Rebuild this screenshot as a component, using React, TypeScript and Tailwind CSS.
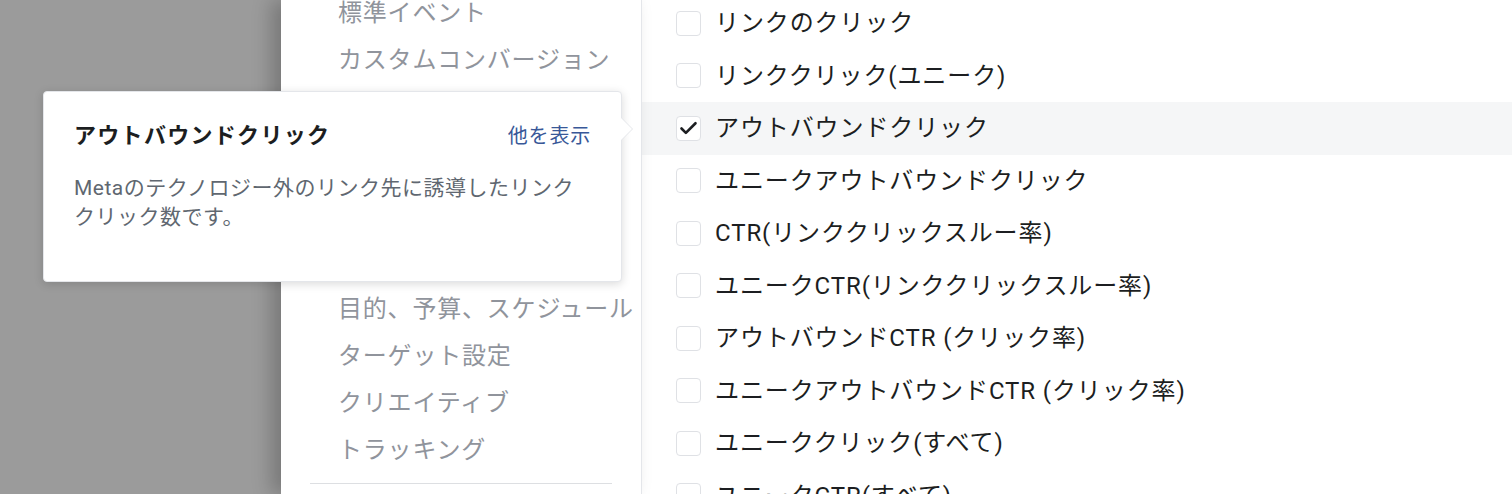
import { Check } from 'lucide-react'

const navTop = ['標準イベント', 'カスタムコンバージョン']
const navBottom = ['目的、予算、スケジュール', 'ターゲット設定', 'クリエイティブ', 'トラッキング']

const metrics = [
  { label: 'リンクのクリック', checked: false },
  { label: 'リンククリック(ユニーク)', checked: false },
  { label: 'アウトバウンドクリック', checked: true },
  { label: 'ユニークアウトバウンドクリック', checked: false },
  { label: 'CTR(リンククリックスルー率)', checked: false },
  { label: 'ユニークCTR(リンククリックスルー率)', checked: false },
  { label: 'アウトバウンドCTR (クリック率)', checked: false },
  { label: 'ユニークアウトバウンドCTR (クリック率)', checked: false },
  { label: 'ユニーククリック(すべて)', checked: false },
  { label: 'ユニークCTR(すべて)', checked: false },
]

const font = { fontFamily: 'Roboto, "Noto Sans CJK JP", sans-serif' }

export default function App() {
  return (
    <div className="relative flex h-[494px] w-[1512px] overflow-hidden bg-white" style={font}>
      {/* dimmed backdrop */}
      <div className="w-[281px] shrink-0 bg-[#9b9b9b]" />

      {/* left nav */}
      <div className="relative z-10 flex w-[361px] shrink-0 flex-col border-r border-[#e4e6ea] bg-white shadow-[-10px_0_18px_rgba(0,0,0,0.22)]">
        <div className="-mt-[10px] flex flex-col pl-[57px]">
          {navTop.map((n) => (
            <div key={n} className="h-[47px] text-[24px] leading-[47px] tracking-[0.8px] text-[#90949c]">
              {n}
            </div>
          ))}
        </div>
        <div className="mt-[202px] flex flex-col pl-[57px]">
          {navBottom.map((n) => (
            <div key={n} className="h-[47px] whitespace-nowrap text-[24px] leading-[47px] tracking-[0.8px] text-[#90949c]">
              {n}
            </div>
          ))}
        </div>
        <div className="mx-[29px] mt-[9px] border-t border-[#dddfe2]" />
      </div>

      {/* metric list */}
      <div className="flex flex-1 flex-col">
        <div className="-mt-[3px] flex flex-col">
          {metrics.map((m) => (
            <div
              key={m.label}
              className={`flex h-[52.5px] shrink-0 items-center pl-[34px] ${m.checked ? 'bg-[#f5f6f7]' : ''}`}
            >
              <div className="flex h-[25px] w-[25px] shrink-0 items-center justify-center rounded-[4px] border border-[#dfe1e5] bg-white">
                {m.checked && <Check className="h-[21px] w-[21px] text-[#1c1e21]" strokeWidth={3} />}
              </div>
              <span className="ml-[14px] whitespace-nowrap text-[24px] tracking-[0.9px] text-[#1c1e21]">{m.label}</span>
            </div>
          ))}
        </div>
      </div>

      {/* tooltip */}
      <div className="absolute left-[43px] top-[91px] z-20 h-[191px] w-[579px] rounded-[4px] border border-[#e4e6ea] bg-white px-[30px] pt-[27px] shadow-[0_2px_10px_rgba(0,0,0,0.15)]">
        <div className="flex items-center justify-between">
          <span className="text-[22px] font-bold tracking-[1.3px] text-[#1c1e21]">アウトバウンドクリック</span>
          <span className="text-[20px] tracking-[0.8px] text-[#385898]">他を表示</span>
        </div>
        <p className="mt-[22px] whitespace-nowrap text-[21px] leading-[29px] tracking-[0.5px] text-[#606770]">
          Metaのテクノロジー外のリンク先に誘導したリンク
          <br />
          クリック数です。
        </p>
        <div className="absolute right-[-12px] top-[25px] h-0 w-0 border-y-[12px] border-l-[12px] border-y-transparent border-l-[#e4e6ea]" />
        <div className="absolute right-[-11px] top-[25px] h-0 w-0 border-y-[12px] border-l-[12px] border-y-transparent border-l-white" />
      </div>
    </div>
  )
}
